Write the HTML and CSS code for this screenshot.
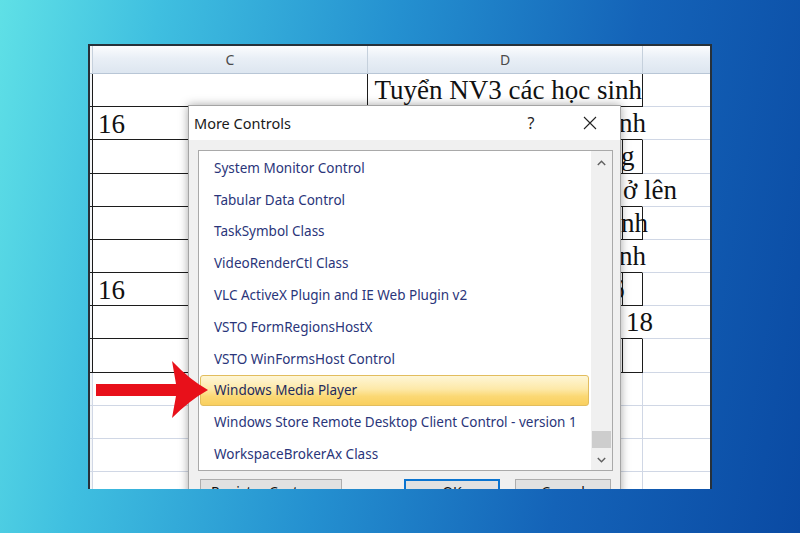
FILE: index.html
```html
<!DOCTYPE html>
<html lang="vi">
<head>
<meta charset="utf-8">
<title>More Controls</title>
<link rel="stylesheet" href="styles.css">
</head>
<body>
<div class="shot">
  <div class="sheet">
    <div class="hd strip"></div><div class="hd col">C</div><div class="hd col">D</div><div class="hd col last"></div>

    <div class="strip dk"></div><div class="c dk dkr"></div><div class="d dk dkr"><span class="txt">Tuyển NV3 các học sinh</span></div><div class="e"></div>

    <div class="strip dk"></div><div class="c dk"><span class="num">16</span></div><div class="d dk open"><span class="frag r2">nh</span></div><div class="e"></div>

    <div class="strip dk"></div><div class="c dk"></div><div class="d dk dkr"><span class="tail">g</span></div><div class="e"></div>

    <div class="strip dk"></div><div class="c dk"></div><div class="d dk open"><span class="frag r4">ở lên</span></div><div class="e"></div>

    <div class="strip dk"></div><div class="c dk"></div><div class="d dk dkr"><span class="tail">nh</span></div><div class="e"></div>

    <div class="strip dk"></div><div class="c dk"></div><div class="d dk open"><span class="frag r6">nh</span></div><div class="e"></div>

    <div class="strip dk"></div><div class="c dk"><span class="num">16</span></div><div class="d dk dkr"><span class="tail t7">6</span></div><div class="e"></div>

    <div class="strip dk"></div><div class="c dk"></div><div class="d dk open"><span class="frag r8">18</span></div><div class="e"></div>

    <div class="strip dk"></div><div class="c dk"></div><div class="d dk dkr"><span class="tail"></span></div><div class="e"></div>

    <div class="strip"></div><div class="c"></div><div class="d"></div><div class="e"></div>
    <div class="strip"></div><div class="c"></div><div class="d"></div><div class="e"></div>
    <div class="strip"></div><div class="c"></div><div class="d"></div><div class="e"></div>
    <div class="strip"></div><div class="c"></div><div class="d"></div><div class="e"></div>
  </div>

  <div class="dialog">
    <div class="titlebar">
      <span class="title">More Controls</span>
      <span class="tbtn help">?</span>
      <span class="tbtn close">
        <svg width="14" height="14" viewBox="0 0 14 14"><path d="M1 1 L13 13 M13 1 L1 13" stroke="#222" stroke-width="1.1" fill="none"/></svg>
      </span>
    </div>
    <div class="body">
      <div class="listbox">
        <div class="items">
          <div class="item">System Monitor Control</div>
          <div class="item">Tabular Data Control</div>
          <div class="item">TaskSymbol Class</div>
          <div class="item">VideoRenderCtl Class</div>
          <div class="item">VLC ActiveX Plugin and IE Web Plugin v2</div>
          <div class="item">VSTO FormRegionsHostX</div>
          <div class="item">VSTO WinFormsHost Control</div>
          <div class="item sel">Windows Media Player</div>
          <div class="item">Windows Store Remote Desktop Client Control - version 1</div>
          <div class="item">WorkspaceBrokerAx Class</div>
        </div>
        <div class="scroll">
          <div class="sbtn up"><svg width="9" height="6" viewBox="0 0 9 6"><path d="M0.8 5 L4.5 1.2 L8.2 5" stroke="#606060" stroke-width="1.4" fill="none"/></svg></div>
          <div class="track"><div class="thumb"></div></div>
          <div class="sbtn down"><svg width="9" height="6" viewBox="0 0 9 6"><path d="M0.8 1 L4.5 4.8 L8.2 1" stroke="#606060" stroke-width="1.4" fill="none"/></svg></div>
        </div>
      </div>
      <div class="buttons">
        <div class="btn reg">Register Custom...</div>
        <div class="btn ok">OK</div>
        <div class="btn cancel">Cancel</div>
      </div>
    </div>
  </div>
</div>

<svg class="arrow" width="118" height="64" viewBox="0 0 118 64">
  <path d="M2 26 H82 L78 3 Q96 22 114 32 Q96 42 78 60 L82 38 H2 Z" fill="#e8101a"/>
</svg>
</body>
</html>
```

FILE: styles.css
```css
html, body {
  margin: 0;
  padding: 0;
}
body {
  width: 800px;
  height: 533px;
  overflow: hidden;
  position: relative;
  background: linear-gradient(100deg, #5fe0e6 0%, #3fbfe0 18%, #2490d0 45%, #1463b8 72%, #0a4aa3 100%);
  font-family: "Noto Sans", "Open Sans", sans-serif;
}

.shot {
  position: relative;
  box-sizing: border-box;
  margin: 44px 0 0 88px;
  width: 624px;
  height: 445px;
  border: 2px solid #27313a;
  border-bottom: none;
  background: #fff;
  overflow: hidden;
}

.sheet {
  display: grid;
  grid-template-columns: 3px 275px 275px 1fr;
  grid-template-rows: 28px 33px 33px 34px 33px 33px 33px 33px 33px 34px 33px 33px 33px 33px;
}
.sheet > div {
  box-sizing: border-box;
  border-right: 1px solid #d0d7e5;
  border-bottom: 1px solid #d0d7e5;
  font-family: "Liberation Serif", "Times New Roman", serif;
  font-size: 27px;
  line-height: 33px;
  color: #111;
  white-space: nowrap;
}

.sheet > .hd {
  background: linear-gradient(#fbfcfe 0%, #e9eff6 45%, #dde6f0 100%);
  border-right: 1px solid #c5d0dc;
  border-bottom: 1px solid #b8c6d6;
  font-family: "Noto Sans", "Open Sans", sans-serif;
  font-size: 14px;
  line-height: 27px;
  color: #4a4a4a;
  text-align: center;
}
.sheet > .hd.last { border-right: none; }

.sheet > .strip { background: #f4f6f8; }
.sheet > .dk { border-bottom-color: #1c1c1c; }
.sheet > .strip.dk { border-right-color: #1c1c1c; }
.sheet > .dkr { border-right-color: #1c1c1c; }
.sheet > .open { border-right-color: transparent; }
.sheet > .e { border-right: none; background: transparent; }

.num { padding-left: 5px; display: inline-block; padding-top: 1px; }
.txt { padding-left: 3px; }

.sheet > .d.open, .sheet > .d.dkr {
  display: flex;
  justify-content: flex-end;
}
.sheet > .d:first-of-type { display: block; }

.frag { display: block; }
.frag.r2 { margin-right: -4px; }
.frag.r4 { margin-right: -35px; }
.frag.r6 { margin-right: -4px; }
.frag.r8 { margin-right: -11px; }

.tail {
  display: block;
  width: 20px;
  box-sizing: border-box;
  border-left: 1px solid #1c1c1c;
  text-indent: -2px;
  overflow: visible;
}
.tail.t7 { text-indent: -12px; }

/* Dialog */
.dialog {
  position: absolute;
  left: 98px;
  top: 59px;
  width: 433px;
  height: 420px;
  box-sizing: border-box;
  border: 1px solid #a4a4a4;
  background: #f0f0f0;
  box-shadow: 0 0 9px rgba(0, 0, 0, 0.35);
}
.titlebar {
  height: 34px;
  background: #fff;
  display: flex;
  align-items: center;
  padding: 0 7px 0 5px;
}
.title {
  flex: 1;
  font-size: 14.5px;
  color: #1a1a1a;
}
.tbtn {
  width: 46px;
  display: flex;
  justify-content: center;
  align-items: center;
  color: #222;
  font-size: 16px;
}
.help { margin-right: 13px; }

.body {
  padding: 10px 7px 0 9px;
}
.listbox {
  height: 321px;
  box-sizing: border-box;
  border: 1px solid #a9a9a9;
  background: #fff;
  display: flex;
}
.items {
  flex: 1;
  padding-top: 1px;
  overflow: hidden;
}
.item {
  height: 31.8px;
  box-sizing: border-box;
  display: flex;
  align-items: center;
  padding-left: 15px;
  font-size: 13.5px;
  color: #2a357a;
  white-space: nowrap;
}
.item.sel {
  margin: 0 2px 0 1px;
  padding-left: 13px;
  border: 1px solid #e2bd5e;
  border-radius: 3px;
  background: linear-gradient(#fef6d6 0%, #fde9a8 45%, #fbd874 70%, #f9cf5e 100%);
  color: #1f2a5c;
}
.scroll {
  width: 21px;
  background: #f0f0f0;
  display: flex;
  flex-direction: column;
}
.sbtn {
  display: flex;
  justify-content: center;
  align-items: center;
}
.sbtn.up { height: 23px; }
.sbtn.down { height: 21px; }
.track {
  flex: 1;
  display: flex;
  flex-direction: column;
  justify-content: flex-end;
}
.thumb {
  height: 17px;
  margin: 0 1px 1px 1px;
  background: #cdcdcd;
}

.buttons {
  display: flex;
  margin-top: 8px;
  padding-left: 2px;
}
.btn {
  height: 24px;
  box-sizing: border-box;
  border: 1px solid #adadad;
  background: #e1e1e1;
  font-size: 14px;
  color: #111;
  display: flex;
  justify-content: center;
  align-items: center;
}
.btn.reg { width: 142px; }
.btn.ok {
  width: 96px;
  margin-left: 62px;
  border: 2px solid #0a74d0;
}
.btn.cancel {
  width: 96px;
  margin-left: 15px;
}

.arrow {
  position: absolute;
  left: 94px;
  top: 358px;
}
```
